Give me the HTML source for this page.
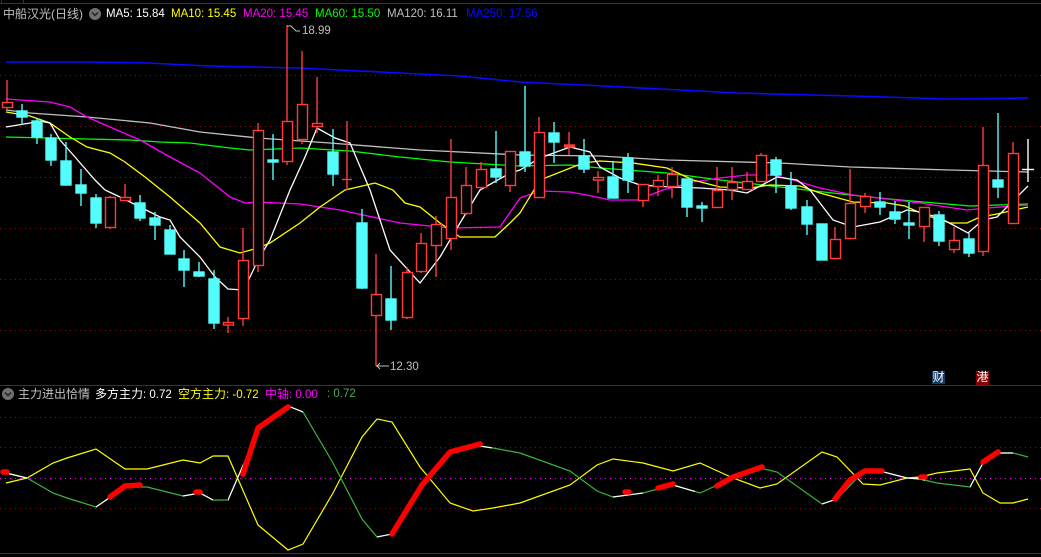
<!DOCTYPE html>
<html><head><meta charset="utf-8"><style>
html,body{margin:0;padding:0;background:#000;width:1041px;height:557px;overflow:hidden}
.t{position:absolute;font-family:"Liberation Sans","Noto Sans CJK SC",sans-serif;font-size:12px;line-height:14px;white-space:nowrap}
</style></head><body>
<svg width="1041" height="557" style="position:absolute;left:0;top:0" xmlns="http://www.w3.org/2000/svg">
<rect width="1041" height="557" fill="#000"/>
<line x1="0" y1="3.5" x2="1041" y2="3.5" stroke="#b00000" stroke-width="1"/>
<line x1="1.5" y1="0" x2="1.5" y2="3" stroke="#b00000"/>
<line x1="23.5" y1="0" x2="23.5" y2="3" stroke="#b00000"/>
<g stroke="#8a1010" stroke-width="1" stroke-dasharray="1,4">
<line x1="0" y1="75.5" x2="1041" y2="75.5"/>
<line x1="0" y1="126.5" x2="1041" y2="126.5"/>
<line x1="0" y1="177.5" x2="1041" y2="177.5"/>
<line x1="0" y1="228.5" x2="1041" y2="228.5"/>
<line x1="0" y1="279.5" x2="1041" y2="279.5"/>
<line x1="0" y1="330.5" x2="1041" y2="330.5"/>
<line x1="0" y1="417.5" x2="1041" y2="417.5"/>
<line x1="0" y1="447.5" x2="1041" y2="447.5"/>
<line x1="0" y1="508.5" x2="1041" y2="508.5"/>
</g>
<line x1="0" y1="478.5" x2="1041" y2="478.5" stroke="#ff00ff" stroke-width="1" stroke-dasharray="1,4"/>
<line x1="0" y1="385.5" x2="1041" y2="385.5" stroke="#b00000"/>
<line x1="0" y1="553.5" x2="1041" y2="553.5" stroke="#b00000"/>

<g fill="none" stroke-width="1.3">
<polyline stroke="#0a0aff" stroke-width="1.6" points="6,62 87,62 148,63 208,66 300,68 400,73 460,76 520,82 603,86 680,90 737,93 853,96 948,99 1028,98"/>
<polyline stroke="#c0c0c0" points="6,110 30,113 87,117 150,123 200,132 258,138 330,143 420,150 520,155 600,156 667,160 780,163 850,167 950,170 1028,172"/>
<polyline stroke="#00ff00" points="6,137 87,139 130,140 160,142 190,143 230,148 250,150 300,148 350,151 400,157 450,162 520,166 570,165 600,168 667,173 720,180 780,187 850,195 900,200 970,206 1028,204"/>
<polyline stroke="#ff00ff" points="6,99 50,102 70,107 87,117 110,127 140,140 170,157 200,173 230,197 245,203 258,202 300,204 340,210 400,223 450,228 500,227 520,198 540,191 570,192 587,195 610,200 637,200 663,190 693,182 720,178 747,175 773,175 793,180 820,188 853,195 887,199 920,203 967,210 987,208 1028,205"/>
<polyline stroke="#ffff00" points="6,112 30,116 50,123 70,137 87,147 110,153 125,162 145,177 170,197 200,223 220,247 240,253 258,248 270,243 300,223 320,207 345,190 375,183 393,190 405,203 420,207 440,223 460,237 495,237 510,223 520,213 540,180 583,163 600,161 633,163 667,168 693,180 720,187 750,188 770,185 800,186 820,193 853,202 887,203 905,206 925,215 950,223 967,223 980,217 997,214 1028,207"/>
<polyline stroke="#ffffff" points="6,127 30,123 40,121 50,123 60,140 75,157 95,180 105,190 120,197 140,207 160,217 170,220 180,237 200,257 215,277 228,289 243,290 250,277 258,260 270,240 290,190 305,157 317,128 335,138 350,143 370,190 390,250 420,283 440,257 460,223 480,190 510,173 520,170 540,158 570,147 590,152 600,167 620,178 640,185 670,187 700,188 730,190 747,193 777,177 797,180 810,190 833,220 853,227 880,222 907,210 920,212 940,218 968,233 983,220 997,217 1028,186"/>
</g>

<g stroke-width="1.4">
<g stroke="#54fcfc" fill="#54fcfc">
<line x1="22" y1="104" x2="22" y2="125"/><rect x="17" y="111" width="10" height="6"/>
<line x1="37" y1="118" x2="37" y2="144"/><rect x="32" y="121" width="10" height="16"/>
<line x1="51" y1="134" x2="51" y2="166"/><rect x="46" y="138" width="10" height="22"/>
<line x1="66" y1="142" x2="66" y2="186"/><rect x="61" y="161" width="10" height="24"/>
<line x1="81" y1="169" x2="81" y2="206"/><rect x="76" y="185" width="10" height="8"/>
<line x1="96" y1="194" x2="96" y2="228"/><rect x="91" y="198" width="10" height="25"/>
<line x1="140" y1="195" x2="140" y2="221"/><rect x="135" y="203" width="10" height="15"/>
<line x1="155" y1="212" x2="155" y2="240"/><rect x="150" y="218" width="10" height="7"/>
<line x1="170" y1="225" x2="170" y2="254"/><rect x="165" y="230" width="10" height="24"/>
<line x1="184" y1="250" x2="184" y2="287"/><rect x="179" y="259" width="10" height="11"/>
<line x1="199" y1="262" x2="199" y2="277"/><rect x="194" y="272" width="10" height="4"/>
<line x1="214" y1="270" x2="214" y2="329"/><rect x="209" y="279" width="10" height="44"/>
<line x1="273" y1="134" x2="273" y2="180"/><rect x="268" y="160" width="10" height="2"/>
<line x1="333" y1="129" x2="333" y2="186"/><rect x="328" y="152" width="10" height="22"/>
<line x1="362" y1="209" x2="362" y2="289"/><rect x="357" y="223" width="10" height="65"/>
<line x1="391" y1="266" x2="391" y2="330"/><rect x="386" y="299" width="10" height="21"/>
<line x1="496" y1="131" x2="496" y2="183"/><rect x="491" y="169" width="10" height="8"/>
<line x1="525" y1="86" x2="525" y2="172"/><rect x="520" y="152" width="10" height="14"/>
<line x1="554" y1="122" x2="554" y2="163"/><rect x="549" y="133" width="10" height="9"/>
<line x1="584" y1="139" x2="584" y2="173"/><rect x="579" y="156" width="10" height="13"/>
<line x1="613" y1="161" x2="613" y2="198"/><rect x="608" y="177" width="10" height="21"/>
<line x1="628" y1="153" x2="628" y2="193"/><rect x="623" y="158" width="10" height="22"/>
<line x1="687" y1="179" x2="687" y2="217"/><rect x="682" y="179" width="10" height="28"/>
<line x1="702" y1="202" x2="702" y2="222"/><rect x="697" y="206" width="10" height="2"/>
<line x1="776" y1="157" x2="776" y2="193"/><rect x="771" y="160" width="10" height="15"/>
<line x1="791" y1="172" x2="791" y2="210"/><rect x="786" y="186" width="10" height="22"/>
<line x1="807" y1="200" x2="807" y2="235"/><rect x="802" y="207" width="10" height="17"/>
<line x1="822" y1="224" x2="822" y2="260"/><rect x="817" y="224" width="10" height="36"/>
<line x1="880" y1="192" x2="880" y2="215"/><rect x="875" y="202" width="10" height="5"/>
<line x1="895" y1="201" x2="895" y2="224"/><rect x="890" y="212" width="10" height="7"/>
<line x1="909" y1="202" x2="909" y2="239"/><rect x="904" y="223" width="10" height="2"/>
<line x1="939" y1="211" x2="939" y2="246"/><rect x="934" y="215" width="10" height="26"/>
<line x1="969" y1="233" x2="969" y2="257"/><rect x="964" y="239" width="10" height="14"/>
<line x1="998" y1="113" x2="998" y2="198"/><rect x="993" y="180" width="10" height="7"/>
</g>
<g stroke="#ff3b3b" fill="#000">
<line x1="7" y1="80" x2="7" y2="110"/><rect x="2.5" y="102.5" width="10" height="5"/>
<line x1="110" y1="196" x2="110" y2="229"/><rect x="105.5" y="197.5" width="10" height="30"/>
<line x1="125" y1="184" x2="125" y2="201"/><rect x="120.5" y="197.5" width="10" height="3"/>
<line x1="228" y1="317" x2="228" y2="333"/><rect x="223.5" y="322.5" width="10" height="2.5"/>
<line x1="243" y1="228" x2="243" y2="326"/><rect x="238.5" y="260.5" width="10" height="58"/>
<line x1="258" y1="123" x2="258" y2="272"/><rect x="253.5" y="130.5" width="10" height="135"/>
<line x1="287" y1="25" x2="287" y2="165"/><rect x="282.5" y="121.5" width="10" height="40"/>
<line x1="302" y1="51" x2="302" y2="144"/><rect x="297.5" y="104.5" width="10" height="35"/>
<line x1="317" y1="77" x2="317" y2="133"/><rect x="312.5" y="123.5" width="10" height="3"/>
<line x1="347" y1="121" x2="347" y2="190"/><line x1="342" y1="179.5" x2="352" y2="179.5"/>
<line x1="376" y1="254" x2="376" y2="366"/><rect x="371.5" y="294.5" width="10" height="21"/>
<line x1="407" y1="267" x2="407" y2="319"/><rect x="402.5" y="272.5" width="10" height="45"/>
<line x1="421" y1="233" x2="421" y2="273"/><rect x="416.5" y="243.5" width="10" height="28"/>
<line x1="436" y1="216" x2="436" y2="277"/><rect x="431.5" y="224.5" width="10" height="21"/>
<line x1="451" y1="139" x2="451" y2="250"/><rect x="446.5" y="197.5" width="10" height="41"/>
<line x1="466" y1="167" x2="466" y2="215"/><rect x="461.5" y="185.5" width="10" height="28"/>
<line x1="481" y1="162" x2="481" y2="189"/><rect x="476.5" y="169.5" width="10" height="18"/>
<line x1="510" y1="151" x2="510" y2="192"/><rect x="505.5" y="151.5" width="10" height="34"/>
<line x1="539" y1="117" x2="539" y2="198"/><rect x="534.5" y="132.5" width="10" height="65"/>
<line x1="569" y1="132" x2="569" y2="155"/><rect x="564.5" y="145" width="10" height="2" fill="#ff3b3b"/>
<line x1="598" y1="171" x2="598" y2="193"/><rect x="593.5" y="177.5" width="10" height="2.5"/>
<line x1="643" y1="184" x2="643" y2="207"/><rect x="638.5" y="184.5" width="10" height="16"/>
<line x1="658" y1="175" x2="658" y2="196"/><rect x="653.5" y="180.5" width="10" height="6"/>
<line x1="672" y1="167" x2="672" y2="198"/><rect x="667.5" y="174.5" width="10" height="12"/>
<line x1="717" y1="167" x2="717" y2="208"/><rect x="712.5" y="190.5" width="10" height="17"/>
<line x1="732" y1="167" x2="732" y2="200"/><rect x="727.5" y="182.5" width="10" height="7"/>
<line x1="747" y1="172" x2="747" y2="190"/><rect x="742.5" y="181.5" width="10" height="8"/>
<line x1="761" y1="153" x2="761" y2="182"/><rect x="756.5" y="155.5" width="10" height="26"/>
<line x1="835" y1="227" x2="835" y2="259"/><rect x="830.5" y="239.5" width="10" height="19"/>
<line x1="850" y1="169" x2="850" y2="239"/><rect x="845.5" y="203.5" width="10" height="35"/>
<line x1="865" y1="193" x2="865" y2="213"/><rect x="860.5" y="196.5" width="10" height="10"/>
<line x1="924" y1="207" x2="924" y2="242"/><rect x="919.5" y="207.5" width="10" height="19"/>
<line x1="954" y1="227" x2="954" y2="253"/><rect x="949.5" y="240.5" width="10" height="9"/>
<line x1="983" y1="127" x2="983" y2="256"/><rect x="978.5" y="165.5" width="10" height="86"/>
<line x1="1013" y1="142" x2="1013" y2="224"/><rect x="1008.5" y="153.5" width="10" height="70"/>
</g>
<g stroke="#ffffff"><line x1="1028" y1="139" x2="1028" y2="182"/><line x1="1022" y1="169.5" x2="1034" y2="169.5"/></g>
</g>
<polyline points="287,26 291,26 296,31 300,31" fill="none" stroke="#c0c0c0" stroke-width="1"/>
<polyline points="376,366 389,366" fill="none" stroke="#c0c0c0" stroke-width="1"/>
<polyline points="380,363 377,366 380,369" fill="none" stroke="#c0c0c0" stroke-width="1"/>

<rect x="932" y="371" width="13" height="13" fill="#163a66"/>
<rect x="976" y="371" width="13" height="14" fill="#8a0000"/>

<defs>
<clipPath id="wclip">
<rect x="0" y="0" width="27" height="557"/><rect x="96" y="0" width="14" height="557"/>
<rect x="183" y="0" width="30" height="557"/><rect x="228" y="0" width="15" height="557"/>
<rect x="288" y="0" width="15" height="557"/><rect x="377" y="0" width="15" height="557"/>
<rect x="480" y="0" width="12" height="557"/><rect x="613" y="0" width="30" height="557"/>
<rect x="673" y="0" width="22" height="557"/><rect x="822" y="0" width="13" height="557"/>
<rect x="880" y="0" width="45" height="557"/><rect x="970" y="0" width="13" height="557"/>
<rect x="998" y="0" width="15" height="557"/>
</clipPath>
</defs>
<g fill="none" stroke-width="1.2">
<polyline stroke="#ffff00" points="6,483 27,478 53,463 67,458 96,449 125,469 147,469 183,460 200,463 213,456 228,456 258,525 288,550 303,544 333,493 362,437 377,419 392,422 420,467 450,503 473,511 493,508 520,503 570,485 597,465 613,459 643,463 673,471 700,463 733,478 760,488 777,484 822,452 837,457 863,484 880,485 907,478 920,477 937,473 970,469 983,493 1000,503 1013,503 1028,499"/>
<g transform="matrix(1,0,0,-1,0,956)">
<polyline stroke="#3cb43c" points="6,483 27,478 53,463 67,458 96,449 125,469 147,469 183,460 200,463 213,456 228,456 258,525 288,550 303,544 333,493 362,437 377,419 392,422 420,467 450,503 473,511 493,508 520,503 570,485 597,465 613,459 643,463 673,471 700,463 733,478 760,488 777,484 822,452 837,457 863,484 880,485 907,478 920,477 937,473 970,469 983,493 1000,503 1013,503 1028,499"/>
<polyline stroke="#ffffff" clip-path="url(#wclip)" points="6,483 27,478 53,463 67,458 96,449 125,469 147,469 183,460 200,463 213,456 228,456 258,525 288,550 303,544 333,493 362,437 377,419 392,422 420,467 450,503 473,511 493,508 520,503 570,485 597,465 613,459 643,463 673,471 700,463 733,478 760,488 777,484 822,452 837,457 863,484 880,485 907,478 920,477 937,473 970,469 983,493 1000,503 1013,503 1028,499"/>
</g>
</g>
<g fill="none" stroke="#ff0000" stroke-width="5.5" stroke-linecap="round" stroke-linejoin="round">
<polyline points="3,472 7,472"/>
<polyline points="110,497 125,486 140,485"/>
<polyline points="196,492 200,492"/>
<polyline points="243,474 258,428 288,407"/>
<polyline points="392,534 422,485 450,452 480,444"/>
<polyline points="625,492 629,492"/>
<polyline points="658,488 673,484"/>
<polyline points="717,486 733,477 762,467"/>
<polyline points="835,499 850,480 865,471 882,471"/>
<polyline points="921,477 925,477"/>
<polyline points="983,462 998,452"/>
</g>
<circle cx="95" cy="14" r="6" fill="#707070"/>
<polyline points="92,12.5 95,15.5 98,12.5" fill="none" stroke="#222" stroke-width="1.5"/>
<circle cx="8" cy="394" r="6" fill="#707070"/>
<polyline points="5,392.5 8,395.5 11,392.5" fill="none" stroke="#222" stroke-width="1.5"/>
</svg>

<div class="t" style="left:3px;top:7px;color:#c0c0c0">中船汉光(日线)</div>
<div class="t" style="left:106px;top:7px;color:#ffffff;font-size:11.5px">MA5: 15.84</div>
<div class="t" style="left:171px;top:7px;color:#ffff00;font-size:11.5px">MA10: 15.45</div>
<div class="t" style="left:243px;top:7px;color:#ff00ff;font-size:11.5px">MA20: 15.45</div>
<div class="t" style="left:315px;top:7px;color:#00ff00;font-size:11.5px">MA60: 15.50</div>
<div class="t" style="left:387px;top:7px;color:#c0c0c0;font-size:11.5px">MA120: 16.11</div>
<div class="t" style="left:466px;top:7px;color:#0a0aff;font-size:11.5px">MA250: 17.56</div>
<div class="t" style="left:302px;top:24px;color:#c0c0c0;font-size:11.5px">18.99</div>
<div class="t" style="left:390px;top:360px;color:#c0c0c0;font-size:11.5px">12.30</div>
<div class="t" style="left:932px;top:370px;color:#fff;font-size:12px;width:13px;text-align:center">财</div>
<div class="t" style="left:976px;top:370px;color:#fff;font-size:12px;width:13px;text-align:center">港</div>
<div class="t" style="left:18px;top:387px;color:#c0c0c0">主力进出恰情</div>
<div class="t" style="left:95px;top:387px;color:#ffffff">多方主力<span style="font-size:11.5px">: 0.72</span></div>
<div class="t" style="left:178px;top:387px;color:#ffff00">空方主力<span style="font-size:11.5px">: -0.72</span></div>
<div class="t" style="left:265px;top:387px;color:#ff00ff">中轴<span style="font-size:11.5px">: 0.00</span></div>
<div class="t" style="left:327px;top:387px;color:#4caf4c;font-size:11.5px">: 0.72</div>
</body></html>
